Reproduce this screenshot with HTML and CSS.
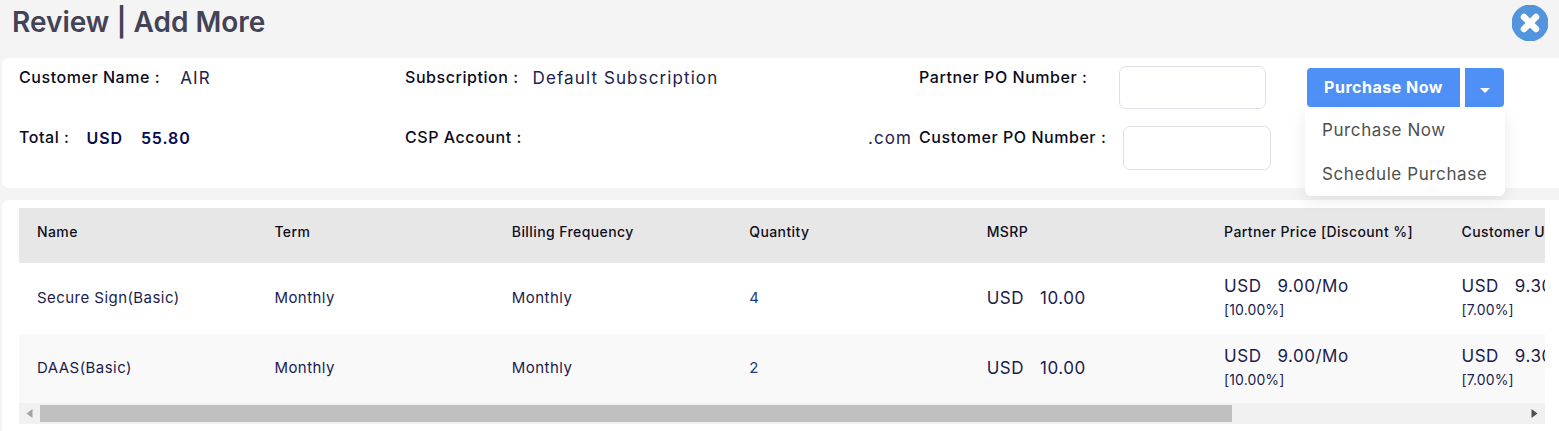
FILE: index.html
```html
<!DOCTYPE html>
<html lang="en">
<head>
    <meta charset="UTF-8">
    <title>Review | Add More</title>
    <link rel="stylesheet" href="styles.css">
</head>
<body>
    <div class="page-head">
        <h1>Review | Add More</h1>
        <button class="close-btn" aria-label="Close">
            <svg width="36" height="36" viewBox="0 0 36 36">
                <circle cx="18" cy="18" r="18.5" fill="#5295dc"/>
                <path d="M12 12L24 24M24 12L12 24" stroke="#fff" stroke-width="6.5" stroke-linecap="round"/>
            </svg>
        </button>
    </div>

    <div class="summary">
        <div class="summary-row">
            <div class="col-a"><span class="label">Customer Name :</span><span class="value name-val">AIR</span></div>
            <div class="col-b"><span class="label">Subscription :</span><span class="value sub-val">Default Subscription</span></div>
            <div class="col-c">
                <span class="label">Partner PO Number :</span>
                <input type="text" class="po-input po-partner">
            </div>
        </div>
        <div class="summary-row row-two">
            <div class="col-a"><span class="label">Total :</span><span class="total">USD<i></i>55.80</span></div>
            <div class="col-b split"><span class="label">CSP Account :</span><span class="value">.com</span></div>
            <div class="col-c">
                <span class="label">Customer PO Number :</span>
                <input type="text" class="po-input po-customer">
            </div>
        </div>

        <div class="purchase">
            <button class="btn-main">Purchase Now</button>
            <button class="btn-caret" aria-label="More"><svg width="10" height="5" viewBox="0 0 10 5"><path d="M0 0H10L5 5Z" fill="#fff"/></svg></button>
            <div class="menu">
                <a>Purchase Now</a>
                <a>Schedule Purchase</a>
            </div>
        </div>
    </div>

    <div class="items">
        <div class="table-wrap">
            <table>
                <thead>
                    <tr>
                        <th>Name</th>
                        <th>Term</th>
                        <th>Billing Frequency</th>
                        <th>Quantity</th>
                        <th>MSRP</th>
                        <th>Partner Price [Discount %]</th>
                        <th>Customer Unit Price</th>
                    </tr>
                </thead>
                <tbody>
                    <tr>
                        <td>Secure Sign(Basic)</td>
                        <td>Monthly</td>
                        <td>Monthly</td>
                        <td class="qty">4</td>
                        <td><span class="price">USD<i></i>10.00</span></td>
                        <td><span class="price">USD<i></i>9.00/Mo</span><span class="disc">[10.00%]</span></td>
                        <td><span class="price">USD<i></i>9.30/Mo</span><span class="disc">[7.00%]</span></td>
                    </tr>
                    <tr class="alt">
                        <td>DAAS(Basic)</td>
                        <td>Monthly</td>
                        <td>Monthly</td>
                        <td class="qty">2</td>
                        <td><span class="price">USD<i></i>10.00</span></td>
                        <td><span class="price">USD<i></i>9.00/Mo</span><span class="disc">[10.00%]</span></td>
                        <td><span class="price">USD<i></i>9.30/Mo</span><span class="disc">[7.00%]</span></td>
                    </tr>
                </tbody>
            </table>
        </div>
        <div class="scrollbar">
            <svg class="arrow" width="6" height="9" viewBox="0 0 6 9"><path d="M6 0V9L0 4.5Z" fill="#a3a3a3"/></svg>
            <div class="track"><div class="thumb"></div></div>
            <svg class="arrow" width="6" height="9" viewBox="0 0 6 9"><path d="M0 0V9L6 4.5Z" fill="#505050"/></svg>
        </div>
    </div>
</body>
</html>
```

FILE: styles.css
```css
body {
    font-family: 'Inter', 'Liberation Sans', sans-serif;
    background: #f4f4f5;
    margin: 0;
    height: 431px;
    overflow: hidden;
    color: #070733;
}
.page-head {
    height: 58px;
    padding-left: 12px;
    padding-right: 11px;
    display: flex;
    justify-content: space-between;
    box-sizing: border-box;
}
h1 {
    margin: 0;
    padding-top: 4px;
    font-size: 28px;
    line-height: 36px;
    font-weight: 600;
    color: #434356;
}
.close-btn {
    background: none;
    border: none;
    padding: 0;
    margin-top: 5px;
    width: 36px;
    height: 36px;
}
.summary {
    position: relative;
    background: white;
    margin-left: 2px;
    height: 130px;
    border-radius: 7px 0 0 7px;
    padding: 0 0 0 17px;
    box-sizing: border-box;
}
.summary-row {
    display: flex;
    height: 60px;
    padding-top: 8px;
    box-sizing: border-box;
}
.col-a {
    width: 386px;
    display: flex;
    align-items: flex-start;
}
.col-b {
    width: 514px;
    display: flex;
    align-items: flex-start;
}
.split {
    justify-content: space-between;
    padding-right: 7px;
    box-sizing: border-box;
}
.col-c {
    display: flex;
    align-items: flex-start;
}
.label {
    font-size: 16px;
    line-height: 22px;
    font-weight: 500;
    letter-spacing: 0.55px;
    color: #0b0b1a;
}
.value {
    margin-top: 1px;
    font-size: 17px;
    line-height: 22px;
    color: #21214a;
    letter-spacing: 1.1px;
}
.name-val {
    margin-left: 20px;
}
.sub-val {
    margin-left: 14px;
}
.total {
    margin-top: 1px;
    margin-left: 17px;
    font-size: 16px;
    line-height: 22px;
    font-weight: 600;
    color: #0a0a50;
    letter-spacing: 0.9px;
}
.total i {
    display: inline-block;
    width: 18px;
}
.po-input {
    display: block;
    box-sizing: border-box;
    border: 1px solid #e0e0e6;
    border-radius: 7px;
    background: white;
}
.po-partner {
    width: 147px;
    height: 43px;
    margin-left: 32px;
}
.po-customer {
    width: 148px;
    height: 44px;
    margin-left: 17px;
}
.purchase {
    position: absolute;
    left: 1305px;
    top: 10px;
    display: flex;
    gap: 5px;
}
.purchase button {
    background: #4e90f5;
    color: white;
    border: none;
    height: 39px;
    font-family: inherit;
}
.btn-main {
    width: 153px;
    padding: 0 0 2px;
    font-size: 16px;
    font-weight: 700;
    letter-spacing: 0.5px;
    border-radius: 4px 0 0 4px;
}
.btn-caret {
    width: 39px;
    border-radius: 0 4px 4px 0;
    padding: 0;
}
.menu {
    position: absolute;
    left: -2px;
    top: 41px;
    width: 200px;
    height: 87px;
    background: white;
    border-radius: 6px;
    box-shadow: 0 4px 16px rgba(0,0,0,0.09);
    z-index: 5;
}
.menu a {
    display: block;
    height: 44px;
    padding-left: 17px;
    font-size: 17px;
    line-height: 43px;
    letter-spacing: 0.6px;
    color: #505050;
}
.items {
    background: white;
    margin: 12px 0 0 2px;
    height: 240px;
    border-radius: 7px 0 0 0;
    padding: 8px 14px 0 17px;
    box-sizing: border-box;
}
.table-wrap {
    overflow: hidden;
    height: 196px;
}
table {
    border-collapse: collapse;
    table-layout: fixed;
    width: 1662px;
}
th {
    background: #e7e7e7;
    height: 55px;
    padding: 0 0 9px 18px;
    text-align: left;
    font-size: 14px;
    font-weight: 500;
    letter-spacing: 0.4px;
    color: #0f0f20;
    box-sizing: border-box;
    white-space: nowrap;
}
td {
    height: 71px;
    padding: 0 0 2px 18px;
    font-size: 15px;
    letter-spacing: 0.45px;
    color: #1c1c4d;
    box-sizing: border-box;
    white-space: nowrap;
}
.alt td {
    background: #f9f9f9;
    padding-bottom: 4px;
}
.qty {
    color: #1d3d7a;
}
.price {
    display: block;
    font-size: 17px;
    line-height: 24px;
    letter-spacing: 0.5px;
}
.price i {
    display: inline-block;
    width: 16px;
}
.disc {
    display: block;
    font-size: 14px;
    line-height: 24px;
    letter-spacing: 0.1px;
}
.scrollbar {
    height: 21px;
    background: #f1f1f1;
    display: flex;
    align-items: center;
    margin-top: -1px;
}
.arrow {
    flex: none;
    width: 21px;
}
.track {
    flex: 1;
    height: 17px;
}
.thumb {
    width: 1192px;
    height: 17px;
    background: #c0c0c0;
}
```
